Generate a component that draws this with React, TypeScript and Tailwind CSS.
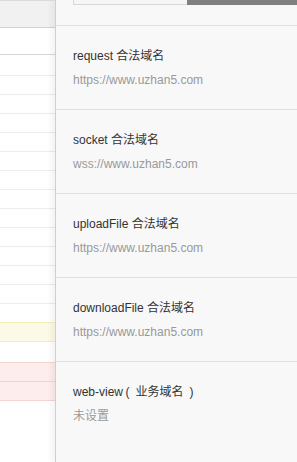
import React from 'react';

interface Row {
  h: string;
  cls: string;
}

const rows: Row[] = [
  { h: 'h-[27px]', cls: 'border-b border-[#d6d6d6]' },
  { h: 'h-[21px]', cls: 'border-b border-[#ececec]' },
  ...Array.from({ length: 12 }).map(() => ({ h: 'h-[19px]', cls: 'border-b border-[#ececec]' })),
  { h: 'h-[18px]', cls: '' },
  { h: 'h-[20px]', cls: 'bg-[#fdf9e7] border-y border-[#f7eebc]' },
  { h: 'h-[20px]', cls: '' },
  { h: 'h-[20px]', cls: 'bg-[#fdeded] border-y border-[#f7d4d4]' },
  { h: 'h-[19px]', cls: 'bg-[#fdeded] border-b border-[#f7d4d4]' },
];

const domains = [
  { title: 'request 合法域名', value: 'https://www.uzhan5.com' },
  { title: 'socket 合法域名', value: 'wss://www.uzhan5.com' },
  { title: 'uploadFile 合法域名', value: 'https://www.uzhan5.com' },
  { title: 'downloadFile 合法域名', value: 'https://www.uzhan5.com' },
];

const App = () => {
  return (
    <div
      className="flex w-[297px] h-[462px] overflow-hidden bg-white text-[12px] leading-4"
      style={{ fontFamily: '"Liberation Sans", Arial, "Noto Sans CJK SC", sans-serif' }}
    >
      {/* table behind the drawer */}
      <div className="w-[55px] shrink-0 flex flex-col bg-white">
        <div className="h-[26px] bg-[#f1f1f1] border-t border-[#dcdcdc] border-b border-b-[#d2d2d2] box-content" />
        {rows.map((r, i) => (
          <div key={i} className={`${r.h} box-border ${r.cls}`} />
        ))}
      </div>

      {/* domain drawer */}
      <div className="flex-1 flex flex-col bg-[#f8f8f8] border-l border-[#cfcfcf] shadow-[-4px_0_6px_rgba(0,0,0,0.05)]">
        <div className="h-[26px] shrink-0 border-b border-[#e0e0e0] box-border">
          <div className="flex h-[5px] pl-[17px]">
            <div className="w-[114px] bg-[#f5f5f5] border-l border-b border-[#d8d8d8]" />
            <div className="flex-1 bg-[#808080]" />
          </div>
        </div>
        {domains.map(d => (
          <div key={d.title} className="h-[84px] shrink-0 box-border border-b border-[#e0e0e0] pl-[17px] pt-[22px] flex flex-col gap-2">
            <div className="text-[#333]">{d.title}</div>
            <div className="text-[#999]">{d.value}</div>
          </div>
        ))}
        <div className="flex-1 pl-[17px] pt-[22px] flex flex-col gap-2">
          <div className="text-[#333]">web-view{'\u2009'}({'\u2002'}业务域名{'\u2002'})</div>
          <div className="text-[#999]">未设置</div>
        </div>
      </div>
    </div>
  );
};

export default App;
